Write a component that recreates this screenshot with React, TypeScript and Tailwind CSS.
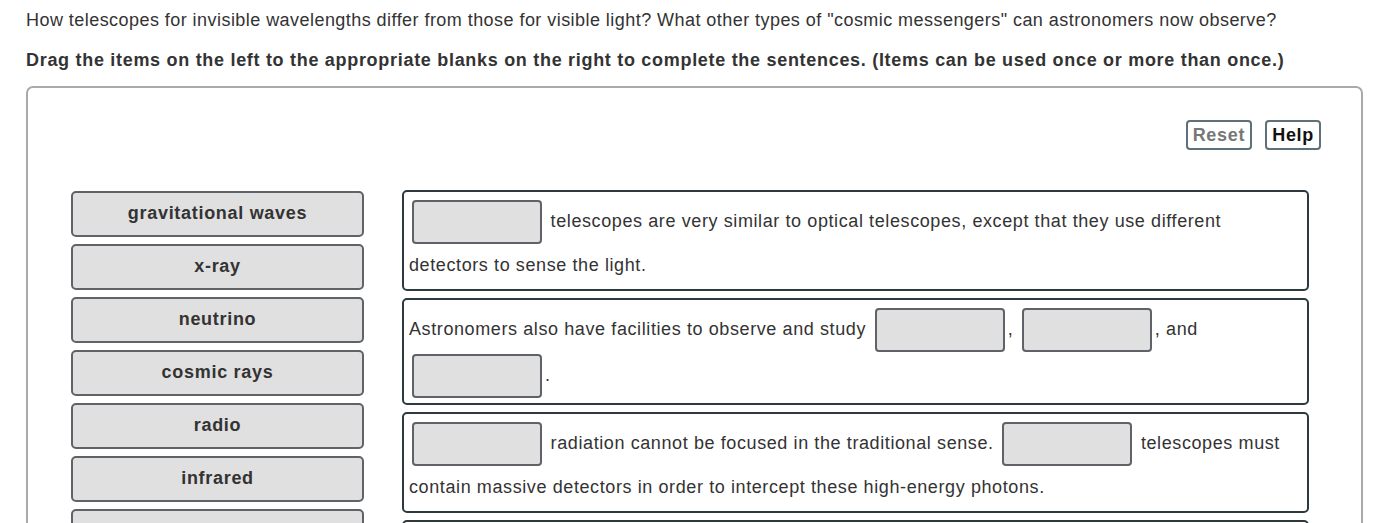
import React from 'react'

const items = ['gravitational waves', 'x-ray', 'neutrino', 'cosmic rays', 'radio', 'infrared', 'gamma-ray']

function Blank() {
  return (
    <span className="inline-block align-middle w-[130px] h-[44px] mx-[3px] my-px bg-[#e0e0e0] border-2 border-[#5f6368] rounded-[4px]" />
  )
}

function Sentence({ children }: { children: React.ReactNode }) {
  return (
    <div className="border-2 border-[#2c3a40] rounded-[5px] px-[5px] pt-[7px] pb-[4px] text-[18px] tracking-[0.6px] leading-[40px] text-[#333]">
      {children}
    </div>
  )
}

export default function App() {
  return (
    <div className="font-['Liberation_Sans',Arial,sans-serif] bg-white w-[1382px] h-[523px] overflow-hidden pl-[26px] pr-[19px]">
      <p className="pt-[9px] text-[18px] tracking-[0.45px] leading-[22px] text-[#333]">
        How telescopes for invisible wavelengths differ from those for visible light? What other types of "cosmic messengers" can astronomers now observe?
      </p>
      <p className="mt-[18px] text-[18px] tracking-[0.7px] leading-[22px] font-bold text-[#333]">
        Drag the items on the left to the appropriate blanks on the right to complete the sentences. (Items can be used once or more than once.)
      </p>

      <div className="mt-[15px] border-2 border-[#aaa] rounded-[7px] pl-[43px] pr-[52px] pt-[32px] pb-10">
        {/* Toolbar */}
        <div className="flex justify-end gap-[13px] mr-[-12px]">
          <button className="h-[30px] px-[5px] border-2 border-[#607078] rounded-[4px] text-[18px] tracking-[0.7px] font-bold text-[#777] leading-none">
            Reset
          </button>
          <button className="h-[30px] px-[5px] border-2 border-[#607078] rounded-[4px] text-[18px] tracking-[0.7px] font-bold text-[#111] leading-none">
            Help
          </button>
        </div>

        <div className="mt-[40px] flex gap-[38px]">
          {/* Draggable items */}
          <div className="w-[293px] flex flex-col gap-[7px] pt-px">
            {items.map((item) => (
              <div
                key={item}
                className="h-[46px] flex items-center justify-center pb-px bg-[#e0e0e0] border-2 border-[#5f6368] rounded-[5px] text-[18px] tracking-[0.7px] font-bold text-[#333]"
              >
                {item}
              </div>
            ))}
          </div>

          {/* Sentences */}
          <div className="flex-1 flex flex-col gap-[7px]">
            <Sentence>
              <Blank /> telescopes are very similar to optical telescopes, except that they use different detectors to sense the light.
            </Sentence>
            <Sentence>
              Astronomers also have facilities to observe and study <Blank />, <Blank />, and <Blank />.
            </Sentence>
            <Sentence>
              <Blank /> radiation cannot be focused in the traditional sense. <Blank /> telescopes must contain massive detectors in order to intercept these high-energy photons.
            </Sentence>
            <Sentence>
              <Blank /> telescopes can be placed on the ground because the atmosphere is transparent to these wavelengths.
            </Sentence>
          </div>
        </div>
      </div>
    </div>
  )
}
